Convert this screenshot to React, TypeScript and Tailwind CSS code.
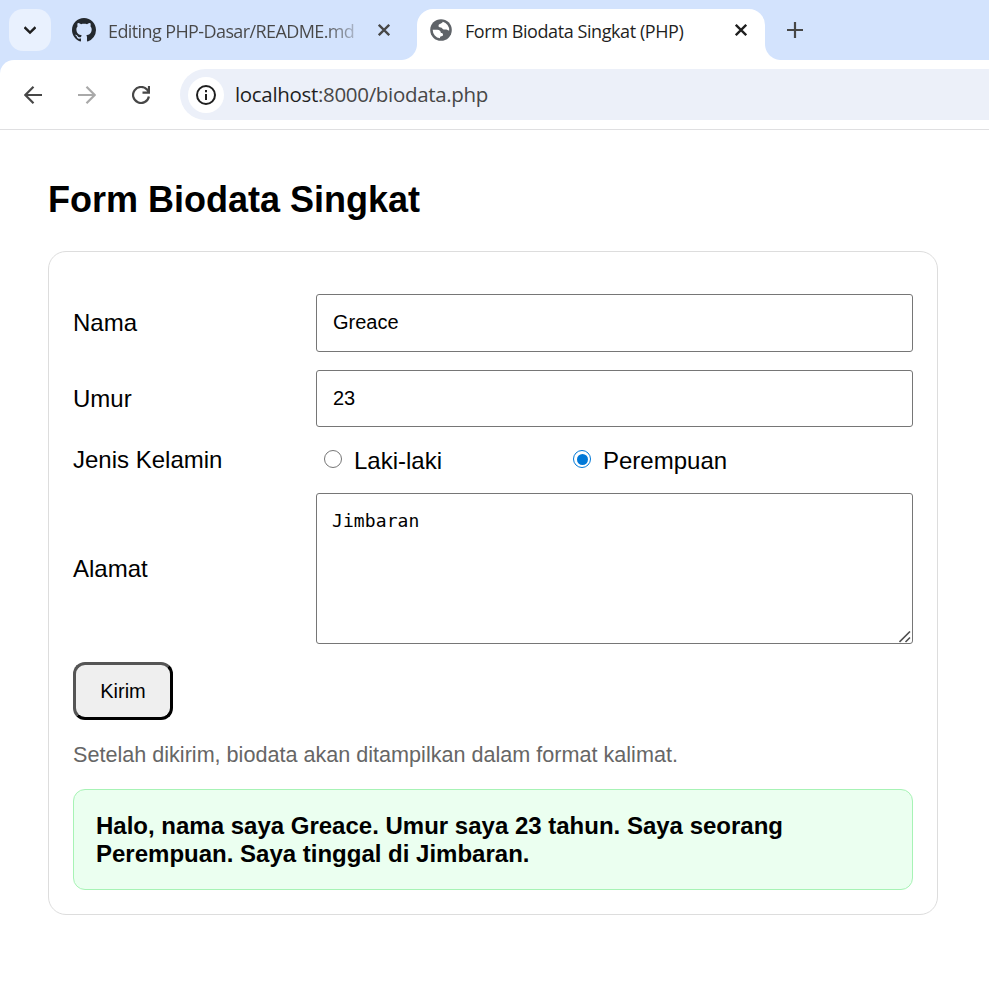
import React from "react";

const UI = "font-['Open_Sans','Noto_Sans',sans-serif]";

function GithubMark() {
  return (
    <svg className="h-6 w-6 shrink-0" viewBox="0 0 16 16" fill="#24292e">
      <path d="M8 0C3.58 0 0 3.58 0 8c0 3.54 2.29 6.53 5.47 7.59.4.07.55-.17.55-.38 0-.19-.01-.82-.01-1.49-2.01.37-2.53-.49-2.69-.94-.09-.23-.48-.94-.82-1.13-.28-.15-.68-.52-.01-.53.63-.01 1.08.58 1.23.82.72 1.21 1.87.87 2.33.66.07-.52.28-.87.51-1.07-1.78-.2-3.64-.89-3.64-3.95 0-.87.31-1.59.82-2.15-.08-.2-.36-1.02.08-2.12 0 0 .67-.21 2.2.82.64-.18 1.32-.27 2-.27s1.36.09 2 .27c1.53-1.04 2.2-.82 2.2-.82.44 1.1.16 1.92.08 2.12.51.56.82 1.27.82 2.15 0 3.07-1.87 3.75-3.65 3.95.29.25.54.73.54 1.48 0 1.07-.01 1.93-.01 2.2 0 .21.15.46.55.38A8.01 8.01 0 0 0 16 8c0-4.42-3.58-8-8-8z" />
    </svg>
  );
}

function Globe() {
  return (
    <svg className="h-[22px] w-[22px] shrink-0" viewBox="0 0 22 22">
      <circle cx="11" cy="11" r="10.8" fill="#5f6368" />
      <path d="M12.800 2.800C12.300 3.800 11.600 4.300 10.500 4.700c-1.200.5-2 .9-2 2c0 1.300.7 1.700 2.200 1.700c1.600 0 1.700 1.700 2.900 2c1.500.4 2.400-.3 3.400.3c.8.5 1.200.700 2.200.7A8.400 8.400 0 0 0 12.800 2.800z" fill="#fff" />
      <path d="M2.700 10.800h4.600c2.200 0 3.600 1.400 3.600 3.300c1.700 0 2.100.6 2.100 1.800c0 1.200-1.400 1.200-2.400 1.500c-.6.3-.6 1-.6 1.800A8.400 8.400 0 0 1 2.700 10.800z" fill="#fff" />
    </svg>
  );
}

function Cross({ color }: { color: string }) {
  return (
    <svg className="h-3 w-3 shrink-0" viewBox="0 0 12 12" fill="none" stroke={color} strokeWidth="2.300">
      <path d="M.8.8l10.400 10.400M11.200.8L.8 11.200" />
    </svg>
  );
}

function TabStrip() {
  return (
    <div className={`flex h-[60px] bg-[#d3e3fd] pl-[9px] ${UI}`}>
      <div className="mt-[9px] flex h-[42px] w-[42px] items-center justify-center rounded-[14px] bg-[#e9f1fe]">
        <svg className="h-3 w-3" viewBox="0 0 12 12" fill="none" stroke="#1f1f1f" strokeWidth="2.400">
          <path d="M.5 3.200L6 8.600l5.500-5.400" />
        </svg>
      </div>
      <div className="flex h-[60px] w-[366px] items-center pl-[21px]">
        <GithubMark />
        <span className="mt-[2px] ml-3 h-7 w-[251px] whitespace-nowrap bg-linear-to-r from-[#474747] from-86% to-[#47474730] bg-clip-text text-[18px] leading-7 tracking-[-0.600px] text-transparent">
          Editing PHP-Dasar/README.md
        </span>
        <span className="ml-[19px]"><Cross color="#474747" /></span>
      </div>
      <div className="relative mt-[9px] flex h-[51px] w-[348px] items-center rounded-t-[16px] bg-white pb-[9px] pl-[13px]">
        <div className="absolute bottom-0 left-[-16px] h-4 w-4 bg-[radial-gradient(circle_at_0_0,#d3e3fd_15.500px,#fff_16.500px)]" />
        <div className="absolute right-[-16px] bottom-0 h-4 w-4 bg-[radial-gradient(circle_at_100%_0,#d3e3fd_15.500px,#fff_16.500px)]" />
        <Globe />
        <span className="mt-[2px] ml-[13px] w-[257px] whitespace-nowrap text-[18px] leading-7 tracking-[-0.420px] text-[#1f1f1f]">
          Form Biodata Singkat (PHP)
        </span>
        <span className="ml-[13px]"><Cross color="#1f1f1f" /></span>
      </div>
      <svg className="mt-[22px] ml-[22px] h-4 w-4" viewBox="0 0 16 16" stroke="#474747" strokeWidth="2.200">
        <path d="M8 0v16M0 8h16" />
      </svg>
    </div>
  );
}

function Toolbar() {
  return (
    <div className="bg-[#d3e3fd]">
      <div className="flex h-[70px] items-center rounded-tl-[14px] border-b border-[#dfdfe1] bg-white pl-6">
        <svg className="h-[18px] w-[18px]" viewBox="0 0 18 18" fill="none" stroke="#474747" strokeWidth="2.200">
          <path d="M18 9H1.500M9.500.8L1.300 9l8.200 8.200" />
        </svg>
        <svg className="ml-9 h-[18px] w-[18px]" viewBox="0 0 18 18" fill="none" stroke="#a9a9a9" strokeWidth="2.200">
          <path d="M0 9h16.500M8.500.8L16.700 9l-8.200 8.200" />
        </svg>
        <svg className="ml-9 h-[18px] w-[18px]" viewBox="0 0 18 18" fill="none" stroke="#474747" strokeWidth="2.200">
          <path d="M16.900 10.500A8 8 0 1 1 15 3.600l1.900 2.200M17 0v6.600h-6.500" />
        </svg>
        <div className="ml-[30px] flex h-[51px] flex-1 items-center rounded-l-full bg-[#ecf0f9] pl-2">
          <div className="flex h-9 w-9 items-center justify-center rounded-full bg-white">
            <svg className="h-5 w-5" viewBox="0 0 20 20" fill="none" stroke="#1f1f1f" strokeWidth="2">
              <circle cx="10" cy="10" r="9" />
              <path d="M10 9v6M10 5v2.200" />
            </svg>
          </div>
          <span className={`mb-[2px] ml-[11px] text-[20.500px] leading-8 tracking-[-0.320px] text-[#474747] ${UI}`}>
            <span className="text-[#1f1f1f]">localhost</span>:8000/biodata.php
          </span>
        </div>
      </div>
    </div>
  );
}

function Radio({ label, checked }: { label: string; checked: boolean }) {
  return (
    <label className="flex w-[249px] items-center">
      <span className={`mb-1 flex h-[18px] w-[18px] items-center justify-center rounded-full border-[1.500px] ${checked ? "border-[#0078d7]" : "border-[#767676]"}`}>
        {checked && <span className="h-[11px] w-[11px] rounded-full bg-[#0078d7]" />}
      </span>
      <span className="ml-3 leading-7">{label}</span>
    </label>
  );
}

export default function App() {
  return (
    <div className="h-[996px] overflow-hidden bg-white font-['Liberation_Sans',Arial,sans-serif] text-[24px] leading-7 text-black">
      <TabStrip />
      <Toolbar />
      <main className="pt-[49px] pl-12">
        <h2 className="text-[36px] leading-[42px] font-bold">Form Biodata Singkat</h2>
        <section className="mt-[30px] h-[664px] w-[890px] rounded-[18px] border border-[#dddddd] px-6 pt-[42px]">
          <div className="grid grid-cols-[243px_597px]">
            <label className="flex h-[58px] items-center">Nama</label>
            <input className="h-[58px] rounded-[3px] border border-[#767676] px-4 pb-[2px] text-[20px]" defaultValue="Greace" />
            <label className="mt-[18px] flex h-[57px] items-center">Umur</label>
            <input className="mt-[18px] h-[57px] rounded-[3px] border border-[#767676] px-4 text-[20px]" defaultValue="23" />
            <label className="mt-[19px] leading-7">Jenis Kelamin</label>
            <div className="mt-[20px] flex pl-2">
              <Radio label="Laki-laki" checked={false} />
              <Radio label="Perempuan" checked />
            </div>
            <label className="mt-[18px] flex h-[151px] items-center">Alamat</label>
            <div className="relative mt-[18px] h-[151px]">
              <textarea
                className="block h-full w-full resize-none rounded-[3px] border border-[#767676] px-[15px] py-[15px] font-['DejaVu_Sans_Mono',monospace] text-[18px] leading-[23px] tracking-[0.100px]"
                defaultValue="Jimbaran"
              />
              <svg className="absolute right-[2px] bottom-[1px] h-3 w-3" viewBox="0 0 12 12" stroke="#505050" strokeWidth="1.600">
                <path d="M.5 11L11 .5M6.500 11L11 6.500" />
              </svg>
            </div>
          </div>
          <button className="mt-[18px] block h-[58px] w-[100px] rounded-[12px] border-[3px] border-t-[#555] border-r-black border-b-black border-l-[#555] bg-[#efefef] text-[20px]">
            Kirim
          </button>
          <p className="mt-[21px] text-[21.600px] leading-7 text-[#666]">
            Setelah dikirim, biodata akan ditampilkan dalam format kalimat.
          </p>
          <div className="mt-5 h-[101px] rounded-[12px] border border-[#a7f3b5] bg-[#ebfff0] px-[22px] pt-[22px] font-bold">
            Halo, nama saya Greace. Umur saya 23 tahun. Saya seorang Perempuan. Saya tinggal di Jimbaran.
          </div>
        </section>
      </main>
    </div>
  );
}
